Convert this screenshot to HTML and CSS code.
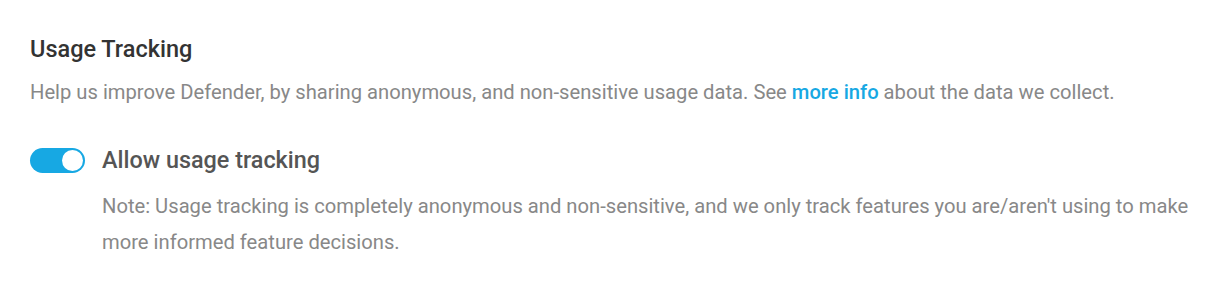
FILE: index.html
```html
<!DOCTYPE html>
<html lang="en">
<head>
    <meta charset="UTF-8">
    <title>Usage Tracking</title>
    <link rel="stylesheet" href="styles.css">
</head>
<body>
    <div class="box-settings">
        <h3 class="settings-title">Usage Tracking</h3>
        <p class="settings-desc">
            Help us improve Defender, by sharing anonymous, and non-sensitive usage data. See <a href="#">more info</a> about the data we collect.
        </p>

        <div class="toggle-row">
            <label class="toggle">
                <input type="checkbox" checked>
                <span class="toggle-slider"></span>
            </label>
            <div class="toggle-content">
                <div class="toggle-label">Allow usage tracking</div>
                <p class="toggle-desc">
                    Note: Usage tracking is completely anonymous and non-sensitive, and we only track features you are/aren't using to make more informed feature decisions.
                </p>
            </div>
        </div>
    </div>
</body>
</html>
```

FILE: styles.css
```css
* {
    margin: 0;
    padding: 0;
    box-sizing: border-box;
}

body {
    font-family: Roboto, "Liberation Sans", sans-serif;
    background: #fff;
    color: #888;
}

.box-settings {
    padding: 35px 30px 20px 30px;
}

.settings-title {
    font-size: 23.5px;
    font-weight: 500;
    line-height: 28px;
    color: #333;
    margin-bottom: 13px;
}

.settings-desc {
    font-size: 20.2px;
    line-height: 32px;
    color: #888;
}

.settings-desc a {
    color: #17a8e3;
    font-weight: 500;
    text-decoration: none;
}

.toggle-row {
    display: flex;
    gap: 17px;
    margin-top: 37px;
}

.toggle {
    position: relative;
    display: block;
    flex: 0 0 55px;
    width: 55px;
    height: 25px;
    margin-top: 3px;
}

.toggle input {
    display: none;
}

.toggle-slider {
    display: block;
    width: 100%;
    height: 100%;
    border-radius: 13px;
    background: #17a8e3;
}

.toggle-slider::after {
    content: "";
    position: absolute;
    top: 2px;
    right: 2px;
    width: 21px;
    height: 21px;
    border-radius: 50%;
    background: #fff;
}

.toggle-label {
    font-size: 23.4px;
    font-weight: 500;
    line-height: 30px;
    color: #555;
}

.toggle-desc {
    font-size: 20.2px;
    line-height: 36px;
    color: #888;
    margin-top: 13px;
}
```
